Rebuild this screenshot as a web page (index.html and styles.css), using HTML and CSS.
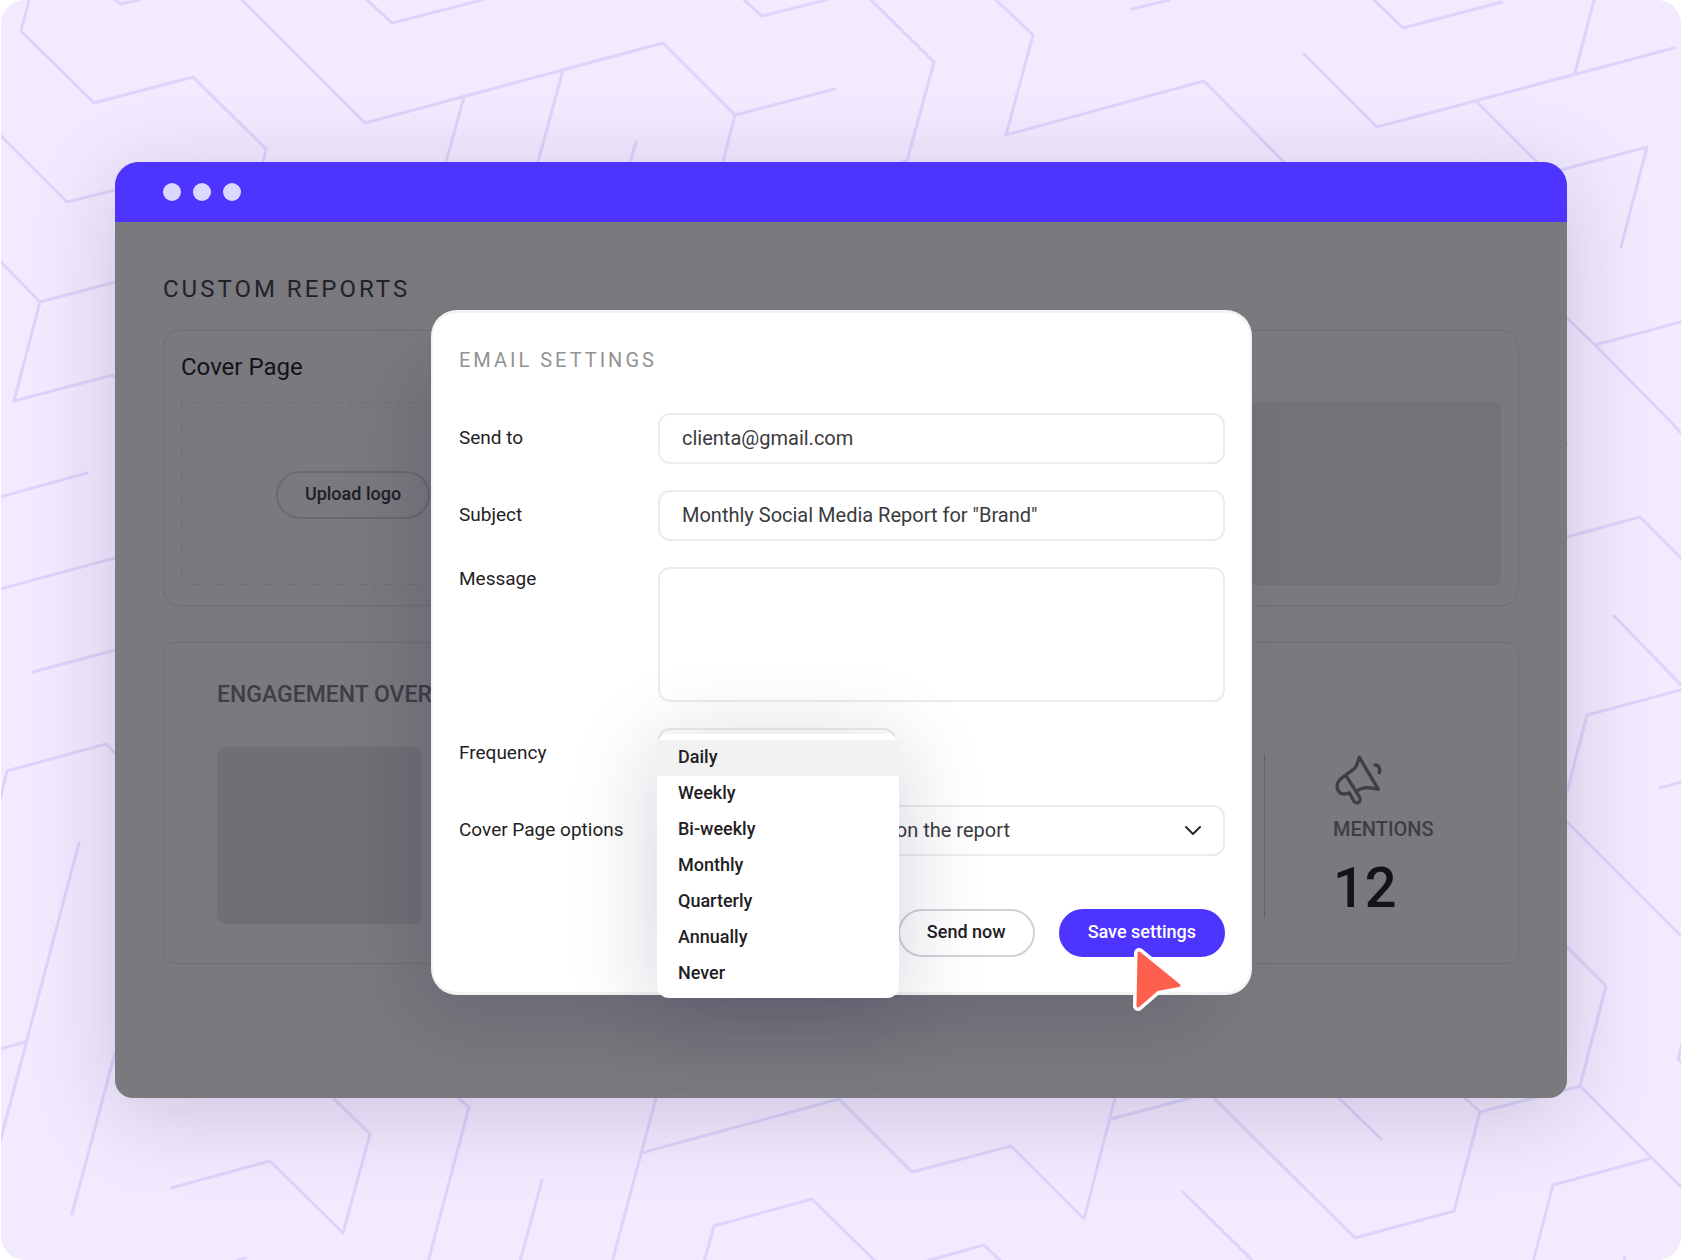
FILE: index.html
```html
<!DOCTYPE html>
<html lang="en">
<head>
<meta charset="utf-8">
<meta name="viewport" content="width=device-width, initial-scale=1">
<title>Custom reports</title>
<link rel="stylesheet" href="styles.css">
</head>
<body>
<main class="stage">
  <svg class="pattern" viewBox="0 0 1680 1260" preserveAspectRatio="xMidYMid slice" aria-hidden="true">
    <g transform="translate(-1 0)">
      <path d="M29 0L21 31L94 103L193 77L266 149L263 162M115 0L121 4L139 0M242 0L365 123L663 43L735 115L835 89M735 115L723 162M464 97L446 162M563 70L538 162M367 0L392 23L482 0"/>
      <path d="M0 135L67 202L115 190M0 261L40 302L115 282M40 302L14 401L113 375L117 379M744 0L762 16L826 0M871 0L934 62L907 161L899 163M996 0L1033 35L1006 135L1204 81L1285 163M636 142L630 163"/>
      <path d="M1132 9L1169 0M1374 0L1403 28L1502 2M1304 54L1377 127L1674 48M1594 0L1575 73M1476 101L1538 163M1561 170L1647 147L1621 247M1567 318L1595 345L1681 322M1595 345L1669 420L1681 433M1560 446L1567 444"/>
      <path d="M0 497L87 473M0 589L115 558M33 672L115 650M0 800L7 771L106 744L115 753M1567 537L1640 517L1681 558M1614 616L1681 685M1567 792L1587 715L1681 690M1660 788L1681 782M1567 822L1681 936"/>
      <path d="M79 843L0 1142M0 1049L25 1042M115 1053L72 1214M171 1188L270 1161L343 1233L370 1134L333 1098M458 1098L469 1107L428 1262M542 1180L520 1262M238 1260L245 1258M656 1098L612 1262"/>
      <path d="M641 1153L839 1099L912 1172L1011 1146L1084 1219L1115 1098M704 1262L714 1226L812 1199L876 1262M923 1262L984 1245L1002 1262M1111 1119L1194 1097M1214 1098L1355 1238L1454 1211L1480 1112L1465 1098"/>
      <path d="M1339 1098L1381 1139M1480 1112L1580 1086M1567 947L1606 986L1580 1086L1652 1158L1681 1187M1652 1158L1553 1185L1533 1262M1183 1192L1254 1262M1625 1257L1624 1262M1682 1044L1678 1059L1682 1063"/>
    </g>
  </svg>

  <section class="window">
    <header class="titlebar">
      <span class="dot"></span><span class="dot"></span><span class="dot"></span>
    </header>

    <div class="content">
      <h1 class="page-title">CUSTOM REPORTS</h1>

      <section class="card cover-card">
        <h2 class="cover-title">Cover Page</h2>
        <div class="cover-grid">
          <div class="dropzone">
            <button class="pill pill-muted" type="button">Upload logo</button>
          </div>
          <div class="preview"></div>
        </div>
      </section>

      <section class="card stats-card">
        <h2 class="stats-title">ENGAGEMENT OVERVIEW</h2>
        <div class="stats-row">
          <div class="chart-block"></div>
          <div class="stat">
            <svg class="megaphone" viewBox="69 41 150 156" aria-hidden="true">
              <path d="M148 51C144 62 141 77 134 84C125 92 100 108 89 119C79 130 79 148 89 157C98 164 109 161 118 157L128 176C132 186 138 189 144 187C151 184 152 177 148 170L138 153C148 147 162 142 172 142C184 143 195 145 205 147Z"/>
              <path d="M108 106L138 153"/>
              <path d="M195 74C206 74 212 85 208 97"/>
            </svg>
            <span class="stat-label">MENTIONS</span>
            <span class="stat-value">12</span>
          </div>
        </div>
      </section>
    </div>

    <div class="overlay">
      <form class="modal">
        <h2 class="modal-title">EMAIL SETTINGS</h2>
        <div class="field">
          <label class="label" for="send-to">Send to</label>
          <input class="control" id="send-to" type="text" value="clienta@gmail.com">
        </div>
        <div class="field">
          <label class="label" for="subject">Subject</label>
          <input class="control" id="subject" type="text" value="Monthly Social Media Report for &quot;Brand&quot;">
        </div>
        <div class="field field-top">
          <label class="label" for="message">Message</label>
          <textarea class="control message" id="message"></textarea>
        </div>
        <div class="field">
          <label class="label" id="frequency-label" for="frequency">Frequency</label>
          <div class="menu-anchor">
            <button class="control" id="frequency" type="button" aria-haspopup="listbox" aria-expanded="true"></button>
            <ul class="menu" role="listbox" aria-labelledby="frequency-label">
              <li class="option option-active" role="option" aria-selected="true">Daily</li>
              <li class="option" role="option">Weekly</li>
              <li class="option" role="option">Bi-weekly</li>
              <li class="option" role="option">Monthly</li>
              <li class="option" role="option">Quarterly</li>
              <li class="option" role="option">Annually</li>
              <li class="option" role="option">Never</li>
            </ul>
          </div>
        </div>
        <div class="field">
          <label class="label" for="cover-options">Cover Page options</label>
          <div class="select-wrap">
            <select class="control" id="cover-options">
              <option>Include this Cover Page on the report</option>
            </select>
            <svg class="chevron" viewBox="0 0 16 10" aria-hidden="true"><path d="M1 1L8 8L15 1"/></svg>
          </div>
        </div>
        <div class="actions">
          <button class="pill" type="button">Send now</button>
          <button class="pill pill-primary" type="button">Save settings
            <svg class="cursor" viewBox="0 0 52 64" aria-hidden="true">
              <path class="cursor-edge" d="M6 5L46 37.500L24 41.500L5 58Z"/>
              <path class="cursor-fill" d="M6 5L46 37.500L24 41.500L5 58Z"/>
            </svg>
          </button>
        </div>
      </form>
    </div>
  </section>
</main>
</body>
</html>
```
FILE: styles.css
```css
* {
  box-sizing: border-box;
}

body {
  margin: 0;
  background: #fff;
  font-family: Roboto, "Liberation Sans", sans-serif;
  color: #1f1e25;
}

h1,
h2,
ul {
  margin: 0;
  padding: 0;
  font-weight: 400;
}

button,
input,
select,
textarea {
  font: inherit;
  color: inherit;
}

.stage {
  position: relative;
  overflow: hidden;
  min-height: 100vh;
  margin-left: 1px;
  padding: 162px 114px;
  border-radius: 24px;
  background: #f2eaff;
}

.pattern {
  position: absolute;
  inset: 0;
  width: 100%;
  height: 100%;
  fill: none;
  stroke: #ddd4fb;
  stroke-width: 3;
  stroke-linecap: round;
  stroke-linejoin: round;
}

.window {
  position: relative;
  border-radius: 24px 24px 18px 18px;
  background: #7a797d;
  box-shadow: 0 16px 88px rgba(20, 20, 66, 0.18);
}

.titlebar {
  display: flex;
  align-items: center;
  gap: 12px;
  height: 60px;
  padding: 0 48px;
  border-radius: 24px 24px 0 0;
  background: #4d35ff;
}

.dot {
  width: 18px;
  height: 18px;
  border-radius: 50%;
  background: #dbd7ff;
}

.content {
  padding: 51px 48px 134px;
}

.page-title {
  font-size: 24px;
  line-height: 32px;
  letter-spacing: 3px;
  color: #232228;
}

.card {
  border: 1px solid #6f6e73;
}

.cover-card {
  margin-top: 25px;
  padding: 20px 17px;
  border-radius: 16px;
}

.cover-title {
  font-size: 24px;
  line-height: 32px;
  color: #141318;
}

.cover-grid {
  display: grid;
  grid-template-columns: 344px 1fr;
  gap: 24px;
  margin-top: 19px;
}

/* Long dashes on all four sides: 6px drawn, 6px open. */
.dropzone {
  --dash: #6f6e73 0 6px, transparent 6px 12px;
  display: grid;
  place-items: center;
  height: 183px;
  padding-top: 2px;
  background:
    repeating-linear-gradient(90deg, var(--dash)) top / 100% 1px no-repeat,
    repeating-linear-gradient(90deg, var(--dash)) bottom / 100% 1px no-repeat,
    repeating-linear-gradient(180deg, var(--dash)) left / 1px 100% no-repeat,
    repeating-linear-gradient(180deg, var(--dash)) right / 1px 100% no-repeat;
}

.preview {
  border-radius: 6px;
  background: #737277;
}

.stats-card {
  margin-top: 36px;
  padding: 36px 0 39px 53px;
  border-radius: 12px;
}

.stats-title {
  font-size: 23px;
  line-height: 32px;
  font-weight: 500;
  color: #3f3e43;
}

.stats-row {
  display: flex;
  align-items: center;
  justify-content: space-between;
  margin-top: 36px;
}

.chart-block {
  width: 205px;
  height: 177px;
  border-radius: 10px;
  background: #706f74;
}

.stat {
  display: flex;
  flex-direction: column;
  align-items: flex-start;
  width: 254px;
  height: 164px;
  padding-left: 68px;
  border-left: 1px solid #646368;
}

.megaphone {
  width: 50px;
  height: 52px;
  fill: none;
  stroke: #3f3e43;
  stroke-width: 10;
  stroke-linecap: round;
  stroke-linejoin: round;
}

.stat-label {
  margin-top: 11px;
  font-size: 20px;
  line-height: 24px;
  font-weight: 500;
  color: #3f3e43;
}

.stat-value {
  margin-top: 17px;
  font-size: 56px;
  line-height: 60px;
  font-weight: 500;
  color: #141318;
}

.pill {
  position: relative;
  height: 48px;
  padding: 0 27px 2px;
  border: 2px solid #d2d2d5;
  border-radius: 24px;
  background: transparent;
  font-size: 18px;
  line-height: 24px;
  font-weight: 500;
  white-space: nowrap;
}

.pill-muted {
  border-color: #6a696e;
}

.pill-primary {
  border-color: #4d35ff;
  background: #4d35ff;
  color: #fff;
}

.overlay {
  position: absolute;
  inset: 148px 0 0;
  display: flex;
  align-items: flex-start;
  justify-content: center;
  padding-left: 1px;
}

.modal {
  width: 821px;
  padding: 27px 25px 35px 26px;
  border: solid #f3f3f3;
  border-width: 3px 2px;
  border-radius: 26px;
  background: #fff;
  box-shadow: -30px 40px 80px -20px rgba(20, 20, 80, 0.18);
}

.modal-title {
  margin-bottom: 38px;
  padding-top: 5px;
  font-size: 20px;
  line-height: 30px;
  letter-spacing: 3px;
  color: #929292;
}

.field {
  display: grid;
  grid-template-columns: 199px 1fr;
  align-items: center;
  margin-bottom: 26px;
  font-size: 20px;
  line-height: 24px;
}

.field-top {
  align-items: start;
}

.label {
  padding-bottom: 1px;
  font-size: 19px;
}

.control {
  display: block;
  width: 100%;
  height: 51px;
  margin: 0;
  padding: 0 22px 2px;
  border: 2px solid #ececec;
  border-radius: 12px;
  background: transparent;
  color: #3b3a40;
  appearance: none;
}

.message {
  height: 135px;
  padding: 12px 22px;
  resize: none;
}

.menu-anchor {
  position: relative;
  width: 238px;
}

.menu {
  position: absolute;
  z-index: 1;
  top: 6px;
  left: -1px;
  width: 242px;
  padding: 6px 0;
  border-radius: 12px;
  background: #fff;
  box-shadow: 0 14px 88px rgba(20, 20, 76, 0.19);
  list-style: none;
}

.option {
  padding: 5px 21px 7px;
  font-size: 18px;
  line-height: 24px;
  font-weight: 500;
}

.option-active {
  background: #f2f2f2;
}

.select-wrap {
  display: grid;
  align-items: center;
}

.select-wrap > * {
  grid-area: 1 / 1;
}

.chevron {
  justify-self: end;
  width: 16px;
  height: 10px;
  margin-right: 24px;
  fill: none;
  stroke: #2a2930;
  stroke-width: 2;
  stroke-linecap: round;
  stroke-linejoin: round;
  pointer-events: none;
}

.actions {
  display: flex;
  justify-content: flex-end;
  gap: 24px;
  margin-top: 53px;
}

.cursor {
  position: absolute;
  top: 37px;
  left: 72px;
  width: 52px;
  height: 64px;
  stroke-linejoin: round;
}

.cursor-edge {
  fill: #fff;
  stroke: #fff;
  stroke-width: 10;
}

.cursor-fill {
  fill: #ff604d;
  stroke: #ff604d;
  stroke-width: 3;
}
```
